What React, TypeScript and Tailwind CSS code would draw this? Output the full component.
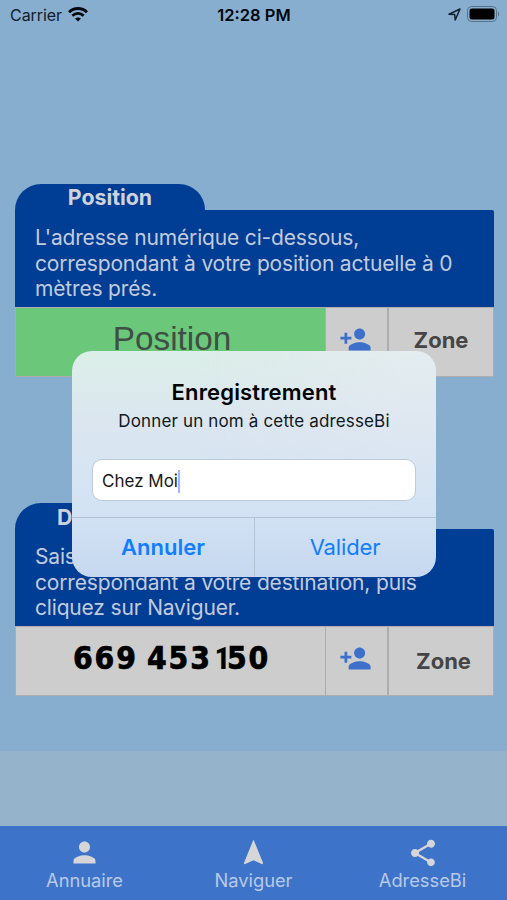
import { MdNavigation, MdPerson, MdPersonAdd, MdShare } from "react-icons/md"

function StatusBar() {
    return (
        <header className="h-[30px] grid grid-cols-3 items-center pl-[10px] pr-[8px] text-[16px] text-[#10202c]">
            <div className="flex items-center gap-[6px] -mt-px">
                <span className="tracking-[-0.05px]">Carrier</span>
                <svg width="20" height="15" viewBox="0 0 20 15" fill="none" stroke="#03080c" strokeWidth="3">
                    <path d="M1 5.3C6 .3 14 .3 19 5.3" />
                    <path d="M4.3 8.8c3.3-3.2 8.1-3.2 11.4 0" strokeWidth="2.6" />
                    <path d="M10 14.6l-2.9-3c1.7-1.5 4.1-1.5 5.8 0z" fill="#03080c" stroke="none" />
                </svg>
            </div>
            <p className="text-center text-[16.5px] font-semibold text-[#03080c] whitespace-nowrap -ml-px">12:28 PM</p>
            <div className="flex items-center justify-end gap-[6px] -mt-[2px]">
                <svg width="13" height="13" viewBox="0 0 13 13" fill="none" stroke="#12222e" strokeWidth="1.5" strokeLinejoin="round" className="mt-px">
                    <path d="M1 6.2L12 1 7.2 12 6.7 6.5z" />
                </svg>
                <svg width="32" height="16" viewBox="0 0 32 16">
                    <rect x=".5" y=".5" width="29" height="15" rx="4" fill="none" stroke="#56728b" />
                    <rect x="2.5" y="2.5" width="25" height="11" rx="2.5" fill="#000" />
                    <path d="M31 5.5c1.6 .8 1.6 4.2 0 5z" fill="#56728b" />
                </svg>
            </div>
        </header>
    )
}

type CardProps = {
    title: string
    lines: string[]
    children: React.ReactNode
    titleClass: string
    valueClass: string
    zoneClass: string
}

function AddressCard({ title, lines, children, titleClass, valueClass, zoneClass }: CardProps) {
    return (
        <section className="ml-[15px] w-[479px]">
            <h2 className={titleClass}>{title}</h2>
            <div className="h-[97px] rounded-tr-[2px] bg-[#003d95] text-[#c3cbdc] pl-[20px] pt-[15px] text-[21px] leading-[25.7px] tracking-[-0.17px]">
                {lines.map((line) => (
                    <p key={line} className="whitespace-nowrap">{line}</p>
                ))}
            </div>
            <div className="h-[70px] flex border border-[#adadad] bg-[#cdcdcd]">
                <div className={valueClass}>{children}</div>
                <button className="w-[64px] flex items-center justify-center border-l border-r-2 border-[#adadad] text-[#3d70cb] pr-[3px]">
                    <MdPersonAdd size={33} className="-mt-[6px]" />
                </button>
                <button className={zoneClass}>Zone</button>
            </div>
        </section>
    )
}

function SaveDialog() {
    return (
        <div className="absolute left-[72px] top-[351px] w-[364px] h-[226px] rounded-[20px] overflow-hidden flex flex-col bg-[linear-gradient(180deg,#dcefe8_0%,#dbe6f0_32%,#d3e3f4_70%,#c6d8f0_100%)]">
            <div className="absolute inset-0 bg-[linear-gradient(90deg,transparent_35%,#e8eaf499_90%)] [mask-image:linear-gradient(#000,transparent_70%)]"></div>
            <div className="relative h-[167px] border-b border-[#b3c4d6] px-[20px] text-center">
                <h1 className="pt-[26px] text-[22px] leading-[30px] font-semibold text-black tracking-[0.15px]">Enregistrement</h1>
                <p className="text-[17px] leading-[28px] text-[#101820] whitespace-nowrap tracking-[0.15px]">Donner un nom à cette adresseBi</p>
                <div className="mt-[24px] h-[42px] rounded-[10px] border border-[#bccad8] bg-white flex items-center pl-[9px] pt-[3px] text-[17px] text-[#181818]">
                    Chez Moi<span className="w-[2px] h-[23px] bg-[#a5b4ff] -mt-px"></span>
                </div>
            </div>
            <div className="relative flex-1 grid grid-cols-2 text-[22px] text-[#117dff]">
                <button className="border-r border-[#b3c4d6] font-semibold -mr-px">Annuler</button>
                <button className="tracking-[-0.15px]">Valider</button>
            </div>
        </div>
    )
}

const tabs = [
    { label: "Annuaire", Icon: MdPerson, size: 33 },
    { label: "Naviguer", Icon: MdNavigation, size: 31 },
    { label: "AdresseBi", Icon: MdShare, size: 32 },
]

export default function App() {
    return (
        <div className="relative w-[507px] h-[900px] overflow-hidden flex flex-col bg-[#87adcf] font-['Inter',sans-serif]">
            <StatusBar />
            <main className="flex-1 pt-[154px]">
                <AddressCard
                    title="Position"
                    lines={["L'adresse numérique ci-dessous,", "correspondant à votre position actuelle à 0", "mètres prés."]}
                    titleClass="w-[190px] h-[26px] rounded-t-[26px] bg-[#003d95] text-[#d0d2dc] text-[21.3px] leading-[27px] font-bold text-center"
                    valueClass="w-[309px] bg-[#6bc87a] text-[#3f4f45] text-[33.3px] leading-[62px] text-center pl-[3px] font-['Liberation_Sans',sans-serif]"
                    zoneClass="flex-1 text-[22px] font-bold text-[#454545] pb-[3px]"
                >
                    Position
                </AddressCard>
                <div className="h-[126px]"></div>
                <AddressCard
                    title="Destination"
                    lines={["Saisissez l'adresse numérique", "correspondant à votre destination, puis", "cliquez sur Naviguer."]}
                    titleClass="w-[190px] h-[26px] rounded-t-[26px] bg-[#003d95] text-[#d0d2dc] text-[21.3px] leading-[28px] font-bold pl-[42px]"
                    valueClass="w-[309px] flex pl-[57px] text-black text-[31.5px] leading-[63px] tracking-[1.9px] font-bold font-['DejaVu_Sans_Condensed','DejaVu_Sans',sans-serif] [font-stretch:condensed] [-webkit-text-stroke:0.7px_#000]"
                    zoneClass="flex-1 text-[22px] font-bold text-[#454545] pl-[5px]"
                >
                    <span className="w-[74px]">669</span>
                    <span className="w-[71px]">453</span>
                    <span className="w-[9px] flex justify-center font-['Roboto',sans-serif] tracking-normal [-webkit-text-stroke:0px]">1</span>
                    <span>50</span>
                </AddressCard>
            </main>
            <div className="h-[75px] bg-[#96b3cc]"></div>
            <nav className="h-[74px] grid grid-cols-3 bg-[#3d74ca] text-[#d2d4da]">
                {tabs.map(({ label, Icon, size }) => (
                    <button key={label} className="flex flex-col items-center pt-[10px] text-[#b9c9e6] text-[18.3px] leading-[23px]">
                        <span className="h-[33px] flex items-center text-[#d6d6d8]"><Icon size={size} /></span>
                        {label}
                    </button>
                ))}
            </nav>
            <SaveDialog />
        </div>
    )
}
